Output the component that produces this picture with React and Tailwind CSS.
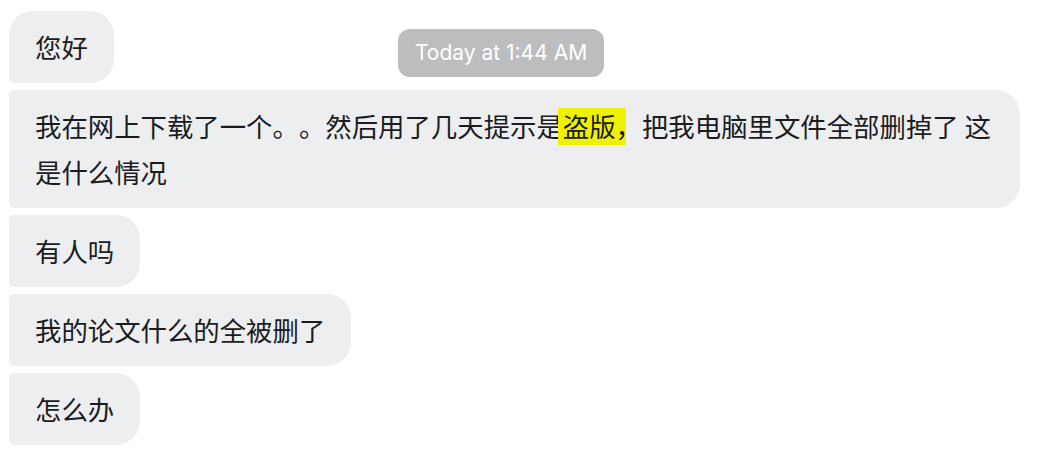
import React from "react";

const cjk = { fontFamily: '"Noto Sans CJK SC", "Noto Sans", sans-serif' };

function Bubble({ children, className = "" }) {
  return (
    <div
      className={
        "bg-[#eceef0] text-[#1c1c1e] text-[26.4px] leading-[46px] px-[26px] py-[13px] max-w-[1011px] [text-spacing-trim:space-all] " +
        className
      }
      style={cjk}
    >
      {children}
    </div>
  );
}

export default function App() {
  return (
    <div className="relative w-[1045px] h-[458px] bg-white overflow-hidden">
      <div className="flex flex-col items-start gap-[7px] pt-[11px] pl-[9px]">
        <Bubble className="rounded-tl-[24px] rounded-tr-[24px] rounded-br-[24px] rounded-bl-[5px]">
          您好
        </Bubble>
        <Bubble className="rounded-tl-[5px] rounded-tr-[24px] rounded-br-[24px] rounded-bl-[5px]">
          我在网上下载了一个<span className="inline-block w-[1em]">。</span><span className="inline-block w-[1em]">。</span>然后用了几天提示是
          <span className="relative">
            <span className="absolute left-[-5px] top-[2px] w-[68px] h-[37px] bg-[#eef200]"></span>
            <span className="relative">盗版<span className="inline-block w-[1em]">，</span></span>
          </span>
          把我电脑里文件全部删掉了 这是什么情况
        </Bubble>
        <Bubble className="rounded-tl-[5px] rounded-tr-[24px] rounded-br-[24px] rounded-bl-[5px]">
          有人吗
        </Bubble>
        <Bubble className="rounded-tl-[5px] rounded-tr-[24px] rounded-br-[24px] rounded-bl-[5px]">
          我的论文什么的全被删了
        </Bubble>
        <Bubble className="rounded-tl-[5px] rounded-tr-[24px] rounded-br-[24px] rounded-bl-[6px]">
          怎么办
        </Bubble>
      </div>
      <div
        className="absolute left-[398px] top-[29px] w-[206px] h-[48px] rounded-[12px] bg-[#bcbdbf] text-white text-[21px] flex items-center justify-center"
        style={{ fontFamily: 'Inter, "Noto Sans", sans-serif' }}
      >
        Today at 1:44 AM
      </div>
    </div>
  );
}
